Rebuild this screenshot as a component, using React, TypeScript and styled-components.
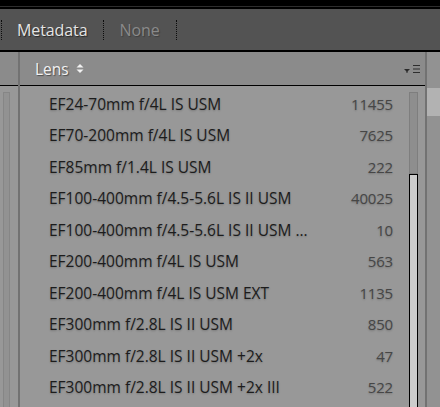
import React from "react";
import styled, { createGlobalStyle } from "styled-components";

const lenses: { name: string; count: number }[] = [
  { name: "EF24-70mm f/4L IS USM", count: 11455 },
  { name: "EF70-200mm f/4L IS USM", count: 7625 },
  { name: "EF85mm f/1.4L IS USM", count: 222 },
  { name: "EF100-400mm f/4.5-5.6L IS II USM", count: 40025 },
  { name: "EF100-400mm f/4.5-5.6L IS II USM ...", count: 10 },
  { name: "EF200-400mm f/4L IS USM", count: 563 },
  { name: "EF200-400mm f/4L IS USM EXT", count: 1135 },
  { name: "EF300mm f/2.8L IS II USM", count: 850 },
  { name: "EF300mm f/2.8L IS II USM +2x", count: 47 },
  { name: "EF300mm f/2.8L IS II USM +2x III", count: 522 },
];

const GlobalStyle = createGlobalStyle`
  html, body {
    margin: 0;
    padding: 0;
    background: #999;
  }
  body {
    font-family: "Open Sans", "Noto Sans", sans-serif;
  }
`;

const Frame = styled.div`
  width: 440px;
  height: 407px;
  overflow: hidden;
  display: flex;
  flex-direction: column;
  background: #999;
`;

const TopStrip = styled.div`
  height: 6px;
  background: #000;
  border-bottom: 1px solid #2d2d2d;
`;

const TabBar = styled.div`
  height: 41px;
  display: flex;
  align-items: center;
  background: #535353;
  border-top: 2px solid #000;
  border-bottom: 2px solid #000;
  padding-left: 1px;
`;

const Dots = styled.span`
  width: 0;
  height: 20px;
  border-left: 1px dotted #0c0c0c;
`;

const Tab = styled.span<{ $active?: boolean }>`
  padding: 0 16px 0 15px;
  font-size: 16px;
  line-height: 20px;
  color: ${(p) => (p.$active ? "#e4e4e4" : "#8a8a8a")};
  text-shadow: ${(p) =>
    p.$active ? "1px 1px 1px rgba(0,0,0,0.55)" : "1px 1px 1px rgba(0,0,0,0.25)"};
  letter-spacing: -0.1px;
`;

const Main = styled.div`
  flex: 1;
  display: flex;
  min-height: 0;
`;

const Column = styled.div<{ $width?: number }>`
  display: flex;
  flex-direction: column;
  ${(p) => (p.$width ? `width: ${p.$width}px;` : "flex: 1;")}
`;

const Divider = styled.div`
  width: 2px;
  background: #727272;
`;

const ColumnHeader = styled.div`
  height: 33px;
  display: flex;
  align-items: center;
  background: #8b8b8b;
  border-bottom: 1px solid #000;
  padding: 0 5px 0 15px;
  gap: 7px;
`;

const HeaderLabel = styled.span`
  font-size: 15.5px;
  color: #f2f2f2;
  text-shadow: 1px 1px 1px rgba(0, 0, 0, 0.45);
`;

const HeaderTools = styled.span`
  margin-left: auto;
  display: flex;
  align-items: center;
  gap: 3px;
`;

const Body = styled.div`
  flex: 1;
  display: flex;
  background: #989898;
`;

const SideStub = styled.div`
  width: 5px;
  height: 100%;
  margin: 6px 0 0 3px;
  border: 1px solid #868686;
  border-bottom: none;
  background: #929292;
`;

const RowList = styled.div`
  flex: 1;
  padding: 2px 7px 0 29px;
`;

const Row = styled.div`
  height: 31.5px;
  display: flex;
  align-items: center;
  text-shadow: 0 1px 2px rgba(0, 0, 0, 0.22);
`;

const LensName = styled.span`
  font-size: 15.5px;
  color: #1c1c1c;
  white-space: nowrap;
`;

const Count = styled.span`
  margin-left: auto;
  font-size: 15px;
  letter-spacing: -0.2px;
  color: #464646;
`;

const Track = styled.div`
  width: 9px;
  margin: 6px 7px 0 9px;
  display: flex;
  flex-direction: column;
`;

const Thumb = styled.div`
  height: 82px;
  box-sizing: border-box;
  border: 1px solid #7e7e7e;
  background: #8e8e8e;
`;

const Rail = styled.div`
  flex: 1;
  box-sizing: border-box;
  border: 1px solid #000;
  border-bottom: none;
  background: #cccccc;
`;

const SidePane = styled.div`
  flex: 1;
  padding-top: 36px;
  background: #929292;
`;

const SideBlock = styled.div`
  height: 28px;
  background: #b2b2b2;
`;

const SortIcon = () => (
  <svg width="8" height="9" viewBox="0 0 8 9">
    <polygon points="4,0 7.5,3.5 0.5,3.5" fill="#f2f2f2" />
    <polygon points="0.5,5.5 7.5,5.5 4,9" fill="#f2f2f2" />
  </svg>
);

const MenuIcon = () => (
  <>
    <svg width="6" height="5" viewBox="0 0 6 5" style={{ marginTop: 5 }}>
      <polygon points="0,0 6,0 3,3" fill="#2a2a2a" />
      <rect x="2.5" y="2" width="1" height="2" fill="#2a2a2a" />
    </svg>
    <svg width="7" height="8" viewBox="0 0 7 8">
      <rect x="0" y="0" width="7" height="1" fill="#2e2e2e" />
      <rect x="0" y="3.5" width="7" height="1" fill="#2e2e2e" />
      <rect x="0" y="7" width="7" height="1" fill="#2e2e2e" />
    </svg>
  </>
);

export default function App() {
  return (
    <Frame>
      <GlobalStyle />
      <TopStrip />
      <TabBar>
        <Dots />
        <Tab $active>Metadata</Tab>
        <Dots />
        <Tab>None</Tab>
        <Dots />
      </TabBar>
      <Main>
        <Column $width={18}>
          <ColumnHeader />
          <Body>
            <SideStub />
          </Body>
        </Column>
        <Divider />
        <Column>
          <ColumnHeader>
            <HeaderLabel>Lens</HeaderLabel>
            <SortIcon />
            <HeaderTools>
              <MenuIcon />
            </HeaderTools>
          </ColumnHeader>
          <Body>
            <RowList>
              {lenses.map((l) => (
                <Row key={l.name}>
                  <LensName>{l.name}</LensName>
                  <Count>{l.count}</Count>
                </Row>
              ))}
            </RowList>
            <Track>
              <Thumb />
              <Rail />
            </Track>
          </Body>
        </Column>
        <Divider />
        <Column $width={13}>
          <SidePane>
            <SideBlock />
          </SidePane>
        </Column>
      </Main>
    </Frame>
  );
}
